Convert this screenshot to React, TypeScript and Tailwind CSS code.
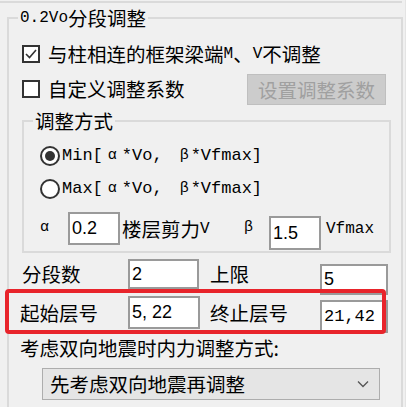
const CJK = "font-['Noto_Sans_CJK_SC',sans-serif]";
const MONO = "font-['Liberation_Mono','Noto_Sans_CJK_SC',monospace]";

function Check({ checked }: { checked?: boolean }) {
  return (
    <span className="flex h-[18px] w-[18px] shrink-0 items-center justify-center border-2 border-[#333] bg-white">
      {checked && (
        <svg width="14" height="14" viewBox="0 0 14 14">
          <polyline points="2,7 5.5,10.5 12,3" fill="none" stroke="#333" strokeWidth="1.6" />
        </svg>
      )}
    </span>
  );
}

function Radio({ checked }: { checked?: boolean }) {
  return (
    <span className="flex h-[20px] w-[20px] shrink-0 items-center justify-center rounded-full border-2 border-[#333] bg-white">
      {checked && <span className="h-[10px] w-[10px] rounded-full bg-[#333]" />}
    </span>
  );
}

function Field({ value, className, mono }: { value: string; className: string; mono?: boolean }) {
  return (
    <div
      className={`flex shrink-0 items-center border-2 border-[#9a9a9a] bg-white pl-[2px] ${
        mono ? "font-['Liberation_Mono',monospace] text-[17px]" : "font-['Liberation_Sans',sans-serif] text-[18px]"
      } ${className}`}
    >
      {value}
    </div>
  );
}

function Formula({ fn }: { fn: string }) {
  return (
    <span className={`flex items-center ${MONO} text-[17px]`}>
      {fn}[<span className="w-[19px] text-center text-[15px]">α</span>*Vo,
      <span className="w-[17px]" />
      <span className="w-[11px] text-[15px]">β</span>*Vfmax]
    </span>
  );
}

export default function App() {
  return (
    <div className={`relative h-[407px] w-[406px] overflow-hidden border-r border-[#e4e4e4] bg-[#f0f0f0] text-[19.5px] text-black ${CJK}`}>
      <div className="mt-[1px] h-[2px] w-[402px] bg-[#dadada]" />

      <fieldset className="ml-[7px] mt-[3px] w-[396px] border-2 border-[#dadada] pb-6">
        <legend className="ml-[9px] flex h-[24px] items-center px-[2px] leading-none">
          <span className={`${MONO} text-[16px]`}>0.2Vo</span>分段调整
        </legend>

        <div className="mt-[12px] flex h-[24px] items-center pl-[13px]">
          <Check checked />
          <span className="ml-[8px] flex items-center">
            与柱相连的框架梁端<span className={`${MONO} text-[16px]`}>M</span>、<span className={`${MONO} text-[16px]`}>V</span>不调整
          </span>
        </div>

        <div className="mt-[8px] flex h-[31px] items-center justify-between pl-[13px] pr-[15px]">
          <div className="-mt-[2px] flex items-center">
            <Check />
            <span className="ml-[8px]">自定义调整系数</span>
          </div>
          <div className="flex h-[31px] w-[139px] items-center justify-center border border-[#bfbfbf] bg-[#cccccc] text-[#a0a0a0]">
            设置调整系数
          </div>
        </div>

        <fieldset className="ml-[13px] mt-[4px] w-[369px] border-2 border-[#dadada] pb-[1px]">
          <legend className="ml-[9px] flex h-[24px] items-center px-[2px] leading-none">调整方式</legend>

          <div className="mt-[11px] flex h-[24px] items-center pl-[16px]">
            <Radio checked />
            <span className="ml-[2px]"><Formula fn="Min" /></span>
          </div>
          <div className="mt-[9px] flex h-[24px] items-center pl-[16px]">
            <Radio />
            <span className="ml-[2px]"><Formula fn="Max" /></span>
          </div>

          <div className="mt-[11px] flex items-start pl-[16px]">
            <span className={`flex h-[33px] w-[28px] items-center ${MONO} text-[15px]`}>α</span>
            <Field value="0.2" className="h-[33px] w-[52px]" />
            <span className="ml-[2px] flex h-[33px] w-[122px] items-center">
              楼层剪力<span className={`${MONO} text-[16px]`}>V</span>
            </span>
            <span className={`flex h-[33px] w-[25px] items-center ${MONO} text-[15px]`}>β</span>
            <Field value="1.5" className="mt-[4px] h-[34px] w-[52px]" />
            <span className={`ml-[5px] flex h-[33px] items-center ${MONO} text-[16px]`}>Vfmax</span>
          </div>
        </fieldset>

        <div className="mt-[6px] flex items-start pl-[13px]">
          <span className="flex h-[30px] w-[106px] items-center">分段数</span>
          <Field value="2" className="h-[30px] w-[71px]" />
          <span className="ml-[11px] flex h-[30px] w-[110px] items-center">上限</span>
          <Field value="5" className="mt-[5px] h-[31px] w-[68px]" />
        </div>

        <div className="mt-[1px] flex items-start pl-[11px]">
          <span className="flex h-[33px] w-[108px] items-center">起始层号</span>
          <Field value="5, 22" className="h-[33px] w-[72px]" />
          <span className="ml-[10px] flex h-[33px] w-[110px] items-center">终止层号</span>
          <Field value="21,42" mono className="mt-[4px] h-[33px] w-[68px]" />
        </div>

        <div className="mt-[3px] flex h-[24px] items-center pl-[11px]">考虑双向地震时内力调整方式:</div>

        <div className="ml-[33px] mt-[8px] flex h-[32px] w-[338px] items-center justify-between border border-[#adadad] bg-[#e5e5e5] pl-[7px] pr-[10px]">
          <span>先考虑双向地震再调整</span>
          <svg width="12" height="8" viewBox="0 0 12 8">
            <polyline points="1,1.5 6,6.5 11,1.5" fill="none" stroke="#555" strokeWidth="1.3" />
          </svg>
        </div>
      </fieldset>

      <div className="absolute left-[5px] top-[289px] h-[45px] w-[381px] rounded-[4px] border-[4px] border-[#e8242b]" />
    </div>
  );
}
